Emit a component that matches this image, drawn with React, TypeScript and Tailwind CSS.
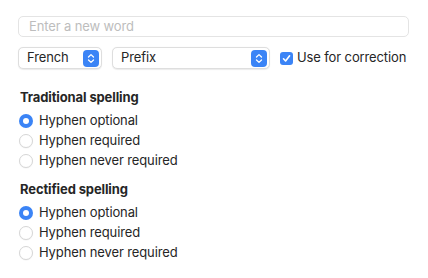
import React from 'react';

function Stepper() {
  return (
    <div className="flex h-[17px] w-[16px] items-center justify-center rounded-[4px] bg-[#3b84f6]">
      <svg width="8" height="11" viewBox="0 0 8 11" fill="none">
        <path d="M1.5 4 L4 1.6 L6.5 4" stroke="white" strokeWidth="1.3" strokeLinecap="round" strokeLinejoin="round" />
        <path d="M1.5 7 L4 9.4 L6.5 7" stroke="white" strokeWidth="1.3" strokeLinecap="round" strokeLinejoin="round" />
      </svg>
    </div>
  );
}

function Select({ label, width }: { label: string; width: string }) {
  return (
    <div
      className={`flex h-[22px] ${width} items-center justify-between rounded-[5px] border border-[#dedede] bg-white pl-[8px] pr-[2px] shadow-[0_0.5px_1px_rgba(0,0,0,0.08)]`}
    >
      <span className="text-[13px] text-[#262626]">{label}</span>
      <Stepper />
    </div>
  );
}

function Radio({ label, checked }: { label: string; checked?: boolean }) {
  return (
    <div className="flex h-[20px] items-center gap-[6px]">
      {checked ? (
        <div className="flex h-[14px] w-[14px] items-center justify-center rounded-full bg-[#3b84f6]">
          <div className="h-[6px] w-[6px] rounded-full bg-white" />
        </div>
      ) : (
        <div className="h-[14px] w-[14px] rounded-full border border-[#d6d6d6] bg-white shadow-[0_0.5px_1px_rgba(0,0,0,0.06)]" />
      )}
      <span className="text-[13px] text-[#262626]">{label}</span>
    </div>
  );
}

function Group({ title }: { title: string }) {
  return (
    <div className="flex flex-col">
      <div className="pl-[2px] text-[13px] font-bold leading-[16px] text-[#262626]">{title}</div>
      <div className="mt-[6px] flex flex-col pl-[1px]">
        <Radio label="Hyphen optional" checked />
        <Radio label="Hyphen required" />
        <Radio label="Hyphen never required" />
      </div>
    </div>
  );
}

export default function App() {
  return (
    <div
      className="h-[278px] w-[428px] bg-white pl-[18px] pr-[19px] pt-[16px] tracking-[-0.12px]"
      style={{ fontFamily: 'Inter, "Noto Sans", sans-serif' }}
    >
      <div className="flex h-[21px] items-center rounded-[5px] border border-[#e4e4e4] bg-white px-[10px]">
        <span className="text-[13px] text-[#bdbdbd]">Enter a new word</span>
      </div>

      <div className="mt-[10px] flex items-center">
        <Select label="French" width="w-[84px]" />
        <div className="ml-[10px]">
          <Select label="Prefix" width="w-[158px]" />
        </div>
        <div className="ml-[10px] flex items-center gap-[4px]">
          <div className="flex h-[13px] w-[13px] items-center justify-center rounded-[3px] bg-[#3b84f6]">
            <svg width="9" height="9" viewBox="0 0 9 9" fill="none">
              <path d="M1.5 4.8 L3.6 7 L7.6 1.8" stroke="white" strokeWidth="1.6" strokeLinecap="round" strokeLinejoin="round" />
            </svg>
          </div>
          <span className="text-[13px] text-[#262626]">Use for correction</span>
        </div>
      </div>

      <div className="mt-[20px]">
        <Group title="Traditional spelling" />
      </div>
      <div className="mt-[10px]">
        <Group title="Rectified spelling" />
      </div>
    </div>
  );
}
